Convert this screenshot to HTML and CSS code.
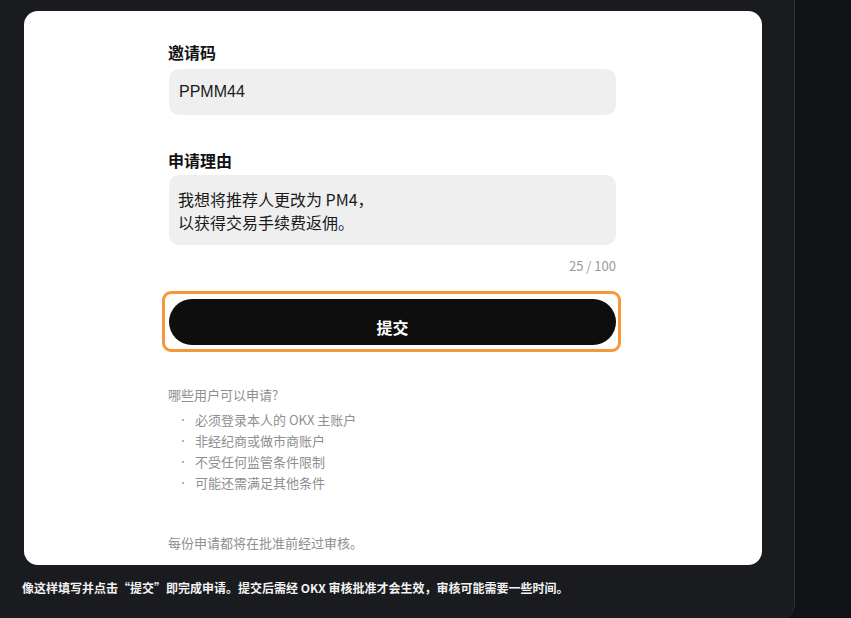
FILE: index.html
```html
<!DOCTYPE html>
<html lang="zh-CN">
<head>
<meta charset="utf-8">
<title>申请</title>
<link rel="stylesheet" href="styles.css">
</head>
<body>
<div class="panel">
  <div class="card">
    <div class="form">
      <div class="label">邀请码</div>
      <div class="input">PPMM44</div>
      <div class="label label-second">申请理由</div>
      <div class="textarea">我想将推荐人更改为 PM4，<br>以获得交易手续费返佣。</div>
      <div class="counter">25 / 100</div>
      <div class="btn-wrap">
        <div class="btn">提交</div>
      </div>
      <div class="info-title">哪些用户可以申请?</div>
      <ul class="info-list">
        <li>必须登录本人的 OKX 主账户</li>
        <li>非经纪商或做市商账户</li>
        <li>不受任何监管条件限制</li>
        <li>可能还需满足其他条件</li>
      </ul>
      <div class="info-note">每份申请都将在批准前经过审核。</div>
    </div>
  </div>
  <div class="caption">像这样填写并点击“提交”即完成申请。提交后需经 OKX 审核批准才会生效，审核可能需要一些时间。</div>
</div>
</body>
</html>
```
FILE: styles.css
```css
html, body {
  margin: 0;
  padding: 0;
  height: 100%;
}
body {
  background: #121316;
  font-family: "Noto Sans CJK SC", "Noto Sans", sans-serif;
  overflow: hidden;
}
.panel {
  width: 795px;
  height: 620px;
  box-sizing: border-box;
  background: #1a1b1f;
  border-right: 1px solid #303136;
  border-bottom-right-radius: 16px;
  padding: 11px 0 0 24px;
}
.card {
  width: 738px;
  height: 554px;
  box-sizing: border-box;
  background: #ffffff;
  border-radius: 14px;
  padding-top: 29px;
}
.form {
  width: 448px;
  margin: 0 0 0 144px;
  display: flex;
  flex-direction: column;
}
.label {
  font-size: 16px;
  font-weight: 700;
  line-height: 24px;
  color: #121212;
  margin-bottom: 5px;
}
.label-second {
  margin-top: 33px;
  margin-bottom: 3px;
}
.input {
  height: 46px;
  box-sizing: border-box;
  margin-left: 1px;
  background: #efefef;
  border-radius: 10px;
  padding: 0 10px;
  display: flex;
  align-items: center;
  font-family: "Liberation Sans", Arial, sans-serif;
  font-size: 16px;
  color: #1a1a1a;
}
.textarea {
  height: 70px;
  box-sizing: border-box;
  margin-left: 1px;
  background: #efefef;
  border-radius: 10px;
  padding: 13px 9px 0;
  font-size: 16px;
  line-height: 23px;
  color: #1a1a1a;
}
.counter {
  margin-top: 12px;
  text-align: right;
  font-size: 13px;
  line-height: 18px;
  color: #9a9a9a;
}
.btn-wrap {
  position: relative;
  margin-top: 24px;
  margin-left: 1px;
}
.btn-wrap::after {
  content: "";
  position: absolute;
  left: -7px;
  right: -5px;
  top: -8px;
  bottom: -7px;
  border: 3px solid #f7963a;
  border-radius: 9px;
}
.btn {
  height: 46px;
  box-sizing: border-box;
  background: #0e0e0e;
  border-radius: 23px;
  color: #ffffff;
  font-size: 16px;
  font-weight: 700;
  line-height: 24px;
  padding-top: 16px;
  text-align: center;
}
.info-title {
  margin-top: 40px;
  font-size: 13px;
  line-height: 20px;
  color: #8f8f8f;
}
.info-list {
  list-style: none;
  margin: 4px 0 0;
  padding: 0;
}
.info-list li {
  position: relative;
  padding-left: 27px;
  font-size: 13px;
  line-height: 21px;
  color: #8f8f8f;
}
.info-list li::before {
  content: "";
  position: absolute;
  left: 14px;
  top: 10px;
  width: 2px;
  height: 2px;
  border-radius: 1px;
  background: #9a9a9a;
}
.info-note {
  margin-top: 40px;
  font-size: 13px;
  line-height: 20px;
  color: #8f8f8f;
}
.caption {
  margin: 14px 0 0 -2px;
  font-size: 12px;
  font-weight: 700;
  line-height: 18px;
  color: #f2f2f2;
}
```
